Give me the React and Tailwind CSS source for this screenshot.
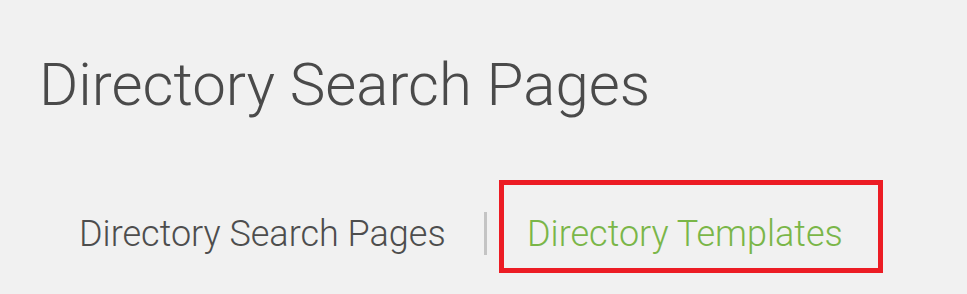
import React from 'react'

const App = () => {
  return (
    <div className="w-[967px] h-[294px] bg-[#f1f1f1] overflow-hidden" style={{ fontFamily: 'Roboto, "Liberation Sans", sans-serif' }}>
      <h1 className="pl-[39px] pt-[55px] text-[60px] leading-[60px] font-light text-[#4a4a4a]">
        Directory Search Pages
      </h1>

      {/* Tabs */}
      <div className="flex items-start mt-[65px]">
        <div className="w-[484px] shrink-0 pl-[79px] mt-[36px] text-[36px] leading-[36px] font-light text-[#4d4d4d] whitespace-nowrap">
          Directory Search Pages
        </div>
        <div className="w-[3px] h-[43px] mt-[32px] shrink-0 bg-[#c4c4c4]" />
        <div className="ml-[12px] w-[384px] h-[93px] shrink-0 border-[5px] border-[#ec1c24] pl-[23px] pt-[31px] text-[36px] leading-[36px] font-light text-[#7ab648] whitespace-nowrap">
          Directory Templates
        </div>
      </div>
    </div>
  )
}

export default App
